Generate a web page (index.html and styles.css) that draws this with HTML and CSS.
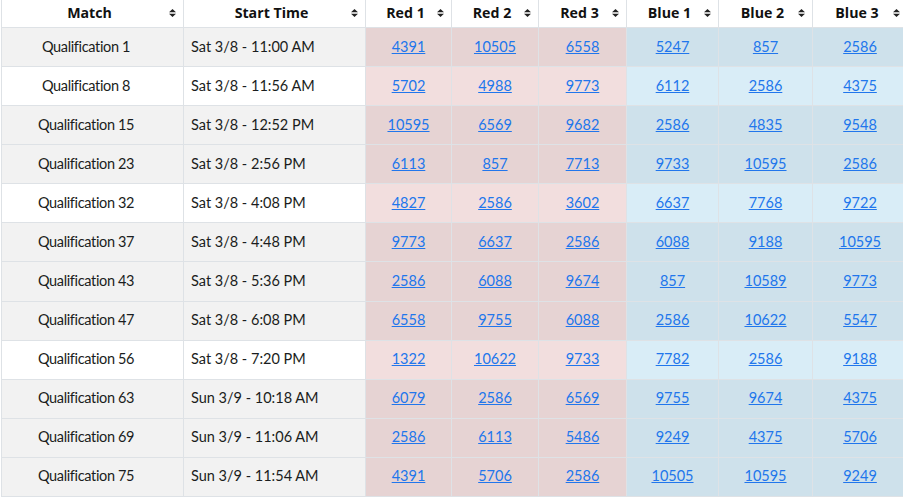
FILE: index.html
```html
<!DOCTYPE html>
<html>
<head>
<meta charset="utf-8">
<link rel="stylesheet" href="styles.css">
</head>
<body>
<svg width="0" height="0" class="defs">
  <defs>
    <symbol id="sort" viewBox="0 0 7 8">
      <path d="M3.5 0 L7 3.3 L0 3.3 Z M3.5 8 L7 4.7 L0 4.7 Z" fill="#222"/>
    </symbol>
  </defs>
</svg>
<table class="matches">
  <colgroup>
    <col class="c-match"><col class="c-time"><col class="c-r1"><col class="c-r2"><col class="c-r3"><col class="c-b1"><col class="c-b2"><col class="c-b3">
  </colgroup>
  <thead>
    <tr>
      <th><div class="th-in"><span class="lbl">Match</span><svg class="si"><use href="#sort"/></svg></div></th>
      <th><div class="th-in"><span class="lbl">Start Time</span><svg class="si"><use href="#sort"/></svg></div></th>
      <th><div class="th-in"><span class="lbl">Red 1</span><svg class="si"><use href="#sort"/></svg></div></th>
      <th><div class="th-in"><span class="lbl">Red 2</span><svg class="si"><use href="#sort"/></svg></div></th>
      <th><div class="th-in"><span class="lbl">Red 3</span><svg class="si"><use href="#sort"/></svg></div></th>
      <th><div class="th-in"><span class="lbl">Blue 1</span><svg class="si"><use href="#sort"/></svg></div></th>
      <th><div class="th-in"><span class="lbl">Blue 2</span><svg class="si"><use href="#sort"/></svg></div></th>
      <th><div class="th-in"><span class="lbl">Blue 3</span><svg class="si"><use href="#sort"/></svg></div></th>
    </tr>
  </thead>
  <tbody>
    <tr class="g"><td class="m">Qualification 1</td><td class="t">Sat 3/8 - 11:00 AM</td><td class="r"><a href="#">4391</a></td><td class="r"><a href="#">10505</a></td><td class="r"><a href="#">6558</a></td><td class="b"><a href="#">5247</a></td><td class="b"><a href="#">857</a></td><td class="b"><a href="#">2586</a></td></tr>
    <tr><td class="m">Qualification 8</td><td class="t">Sat 3/8 - 11:56 AM</td><td class="r"><a href="#">5702</a></td><td class="r"><a href="#">4988</a></td><td class="r"><a href="#">9773</a></td><td class="b"><a href="#">6112</a></td><td class="b"><a href="#">2586</a></td><td class="b"><a href="#">4375</a></td></tr>
    <tr class="g"><td class="m">Qualification 15</td><td class="t">Sat 3/8 - 12:52 PM</td><td class="r"><a href="#">10595</a></td><td class="r"><a href="#">6569</a></td><td class="r"><a href="#">9682</a></td><td class="b"><a href="#">2586</a></td><td class="b"><a href="#">4835</a></td><td class="b"><a href="#">9548</a></td></tr>
    <tr class="g"><td class="m">Qualification 23</td><td class="t">Sat 3/8 - 2:56 PM</td><td class="r"><a href="#">6113</a></td><td class="r"><a href="#">857</a></td><td class="r"><a href="#">7713</a></td><td class="b"><a href="#">9733</a></td><td class="b"><a href="#">10595</a></td><td class="b"><a href="#">2586</a></td></tr>
    <tr><td class="m">Qualification 32</td><td class="t">Sat 3/8 - 4:08 PM</td><td class="r"><a href="#">4827</a></td><td class="r"><a href="#">2586</a></td><td class="r"><a href="#">3602</a></td><td class="b"><a href="#">6637</a></td><td class="b"><a href="#">7768</a></td><td class="b"><a href="#">9722</a></td></tr>
    <tr class="g"><td class="m">Qualification 37</td><td class="t">Sat 3/8 - 4:48 PM</td><td class="r"><a href="#">9773</a></td><td class="r"><a href="#">6637</a></td><td class="r"><a href="#">2586</a></td><td class="b"><a href="#">6088</a></td><td class="b"><a href="#">9188</a></td><td class="b"><a href="#">10595</a></td></tr>
    <tr class="g"><td class="m">Qualification 43</td><td class="t">Sat 3/8 - 5:36 PM</td><td class="r"><a href="#">2586</a></td><td class="r"><a href="#">6088</a></td><td class="r"><a href="#">9674</a></td><td class="b"><a href="#">857</a></td><td class="b"><a href="#">10589</a></td><td class="b"><a href="#">9773</a></td></tr>
    <tr class="g"><td class="m">Qualification 47</td><td class="t">Sat 3/8 - 6:08 PM</td><td class="r"><a href="#">6558</a></td><td class="r"><a href="#">9755</a></td><td class="r"><a href="#">6088</a></td><td class="b"><a href="#">2586</a></td><td class="b"><a href="#">10622</a></td><td class="b"><a href="#">5547</a></td></tr>
    <tr><td class="m">Qualification 56</td><td class="t">Sat 3/8 - 7:20 PM</td><td class="r"><a href="#">1322</a></td><td class="r"><a href="#">10622</a></td><td class="r"><a href="#">9733</a></td><td class="b"><a href="#">7782</a></td><td class="b"><a href="#">2586</a></td><td class="b"><a href="#">9188</a></td></tr>
    <tr class="g"><td class="m">Qualification 63</td><td class="t">Sun 3/9 - 10:18 AM</td><td class="r"><a href="#">6079</a></td><td class="r"><a href="#">2586</a></td><td class="r"><a href="#">6569</a></td><td class="b"><a href="#">9755</a></td><td class="b"><a href="#">9674</a></td><td class="b"><a href="#">4375</a></td></tr>
    <tr class="g"><td class="m">Qualification 69</td><td class="t">Sun 3/9 - 11:06 AM</td><td class="r"><a href="#">2586</a></td><td class="r"><a href="#">6113</a></td><td class="r"><a href="#">5486</a></td><td class="b"><a href="#">9249</a></td><td class="b"><a href="#">4375</a></td><td class="b"><a href="#">5706</a></td></tr>
    <tr class="g"><td class="m">Qualification 75</td><td class="t">Sun 3/9 - 11:54 AM</td><td class="r"><a href="#">4391</a></td><td class="r"><a href="#">5706</a></td><td class="r"><a href="#">2586</a></td><td class="b"><a href="#">10505</a></td><td class="b"><a href="#">10595</a></td><td class="b"><a href="#">9249</a></td></tr>
  </tbody>
</table>
</body>
</html>
```

FILE: styles.css
```css
html, body {
  margin: 0;
  padding: 0;
  overflow: hidden;
  background: #fff;
}
body {
  font-family: Lato, "Open Sans", sans-serif;
  font-size: 14.5px;
  color: #1a1d20;
}
.defs {
  position: absolute;
  width: 0;
  height: 0;
}
.matches {
  border-collapse: collapse;
  table-layout: fixed;
  width: 906px;
  margin-left: 1px;
}
.c-match { width: 182px; }
.c-time { width: 182px; }
.c-r1 { width: 86px; }
.c-r2 { width: 87px; }
.c-r3 { width: 88px; }
.c-b1 { width: 92px; }
.c-b2 { width: 94px; }
.c-b3 { width: 95px; }

.matches th,
.matches td {
  border: 1px solid #dee2e6;
  white-space: nowrap;
}
.matches th {
  border-top: 0;
  height: 26px;
  padding: 0 7px 1px 8px;
  font-family: "Open Sans", Lato, sans-serif;
  font-weight: 700;
  font-size: 14.2px;
  line-height: 20px;
  color: #111;
  background: #fff;
}
.th-in {
  display: flex;
  align-items: center;
}
.lbl {
  flex: 1;
  text-align: center;
}
.si {
  width: 7px;
  height: 8px;
  flex: none;
}
.matches td {
  height: 39.08px;
  box-sizing: border-box;
  padding: 0 8px 1px;
  line-height: 20px;
  text-align: center;
}
.matches td.m {
  padding-right: 21px;
  letter-spacing: -0.35px;
}
.matches td.t {
  text-align: left;
  padding-left: 7px;
}
.matches td.m,
.matches td.t { background: #fff; }
.matches td.r { background: #f2dede; }
.matches td.b { background: #d9edf7; }
.matches tr.g td.m,
.matches tr.g td.t { background: #f2f2f2; }
.matches tr.g td.r { background: #e6d3d3; }
.matches tr.g td.b { background: #cee1eb; }

.matches a {
  color: #2176ec;
  text-decoration: underline;
}
```
